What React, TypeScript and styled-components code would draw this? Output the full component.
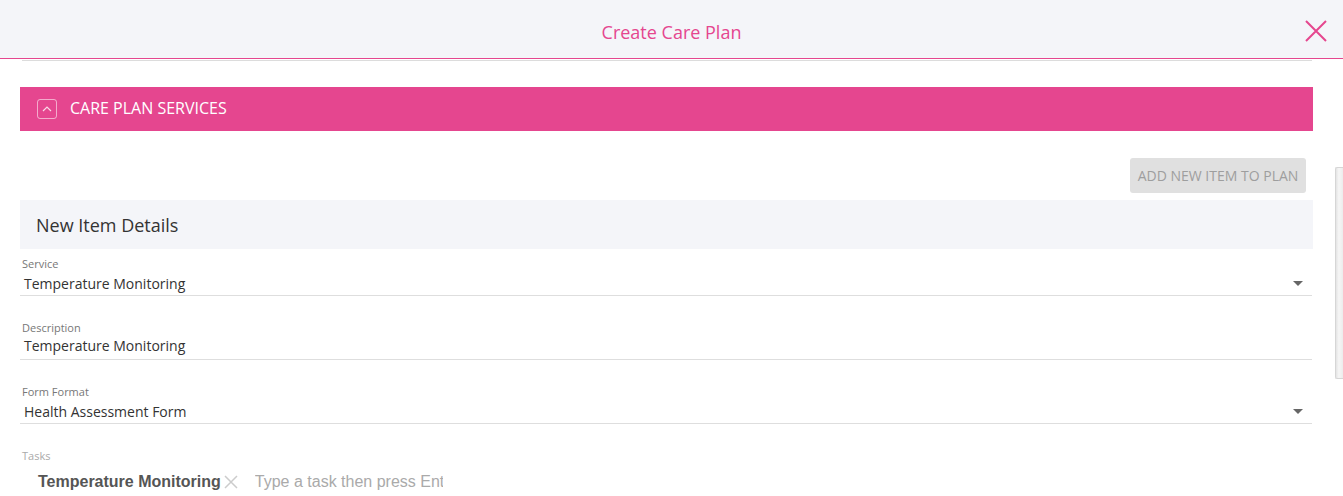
import React from "react";
import styled, { createGlobalStyle } from "styled-components";

const GlobalStyle = createGlobalStyle`
  html, body { margin: 0; padding: 0; background: #ffffff; }
  body { font-family: "Open Sans", "Liberation Sans", sans-serif; color: #333; overflow: hidden; }
  * { box-sizing: border-box; }
`;

const PINK = "#e5468f";

const Page = styled.div`
  position: relative;
  width: 1343px;
  height: 496px;
  overflow: hidden;
`;

const Header = styled.header`
  height: 59px;
  background: #f4f5f9;
  border-bottom: 1px solid ${PINK};
  display: flex;
  align-items: center;
  justify-content: center;
  position: relative;
`;

const Title = styled.h1`
  margin: 0;
  font-size: 18px;
  font-weight: 400;
  color: ${PINK};
  line-height: 24px;
  margin-top: 5px;
`;

const CloseButton = styled.button`
  position: absolute;
  right: 15px;
  top: 19px;
  width: 24px;
  height: 24px;
  padding: 0;
  border: none;
  background: transparent;
  display: flex;
  align-items: center;
  justify-content: center;
`;

const Body = styled.div`
  padding: 0 30px 0 20px;
  display: flex;
  flex-direction: column;
`;

const Divider = styled.div`
  height: 1px;
  background: #dcdcdc;
  margin: 1px 1px 0 2px;
`;

const SectionBar = styled.div`
  margin-top: 26px;
  height: 44px;
  background: ${PINK};
  display: flex;
  align-items: center;
  padding-left: 17px;
  gap: 13px;
`;

const ToggleBox = styled.span`
  width: 20px;
  height: 20px;
  border: 1px solid rgba(255, 255, 255, 0.55);
  border-radius: 3px;
  display: flex;
  align-items: center;
  justify-content: center;
`;

const SectionTitle = styled.span`
  color: #fff;
  font-size: 16px;
  text-transform: uppercase;
  line-height: 22px;
  margin-bottom: 2px;
`;

const ActionRow = styled.div`
  display: flex;
  justify-content: flex-end;
  margin-top: 27px;
  padding-right: 7px;
`;

const AddButton = styled.button`
  height: 35px;
  padding: 0 6px;
  background: #e0e0e0;
  color: #9e9e9e;
  border: none;
  border-radius: 3px;
  font-family: "Open Sans", "Liberation Sans", sans-serif;
  font-size: 14px;
  text-transform: uppercase;
  width: 176px;
`;

const DetailsHeader = styled.div`
  margin-top: 7px;
  height: 49px;
  background: #f4f5f9;
  display: flex;
  align-items: center;
  padding-left: 16px;
  font-size: 18px;
  color: #333;
`;

const Field = styled.div<{ $first?: boolean; $select?: boolean; $plain?: boolean }>`
  position: relative;
  padding-top: ${(p) => (p.$first ? "8px" : "25px")};
  padding-bottom: ${(p) => (p.$select ? "1px" : "3px")};
  border-bottom: ${(p) => (p.$plain ? "none" : "1px solid #dedede")};
  margin-right: 1px;
`;

const Label = styled.div<{ $muted?: boolean }>`
  font-size: 11px;
  line-height: 14px;
  color: ${(p) => (p.$muted ? "#aaa" : "#777")};
  padding-left: 2px;
`;

const Value = styled.div<{ $select?: boolean }>`
  font-size: 14px;
  line-height: 20px;
  color: #333;
  padding-left: 4px;
  margin-top: ${(p) => (p.$select ? "3px" : "1px")};
`;

const Caret = styled.span`
  position: absolute;
  right: 9px;
  bottom: 9px;
  width: 0;
  height: 0;
  border-left: 5px solid transparent;
  border-right: 5px solid transparent;
  border-top: 5px solid #666;
`;

const TaskRow = styled.div`
  display: flex;
  align-items: center;
  padding-left: 18px;
  margin-top: 8px;
  height: 22px;
`;

const Chip = styled.span`
  font-family: "Liberation Sans", Arial, sans-serif;
  font-weight: 700;
  font-size: 16px;
  color: #555;
  display: flex;
  align-items: center;
`;

const ChipRemove = styled.span`
  display: flex;
  margin-left: 2px;
`;

const TaskInput = styled.input`
  margin-left: 16px;
  width: 188px;
  border: none;
  outline: none;
  padding: 0;
  font-family: "Liberation Sans", Arial, sans-serif;
  font-size: 16px;
  color: #333;
  background: transparent;
  &::placeholder { color: #aaa; }
`;

const ScrollThumb = styled.div`
  position: absolute;
  right: 0;
  top: 167px;
  width: 8px;
  height: 212px;
  border: 1px solid #d6d6d6;
  border-right: none;
  border-radius: 2px 0 0 2px;
  background: linear-gradient(to right, #e4e4e4, #f6f6f6 40%, #ececec);
`;

export default function App() {
  return (
    <Page>
      <GlobalStyle />
      <Header>
        <Title>Create Care Plan</Title>
        <CloseButton aria-label="Close">
          <svg width="22" height="22" viewBox="0 0 22 22">
            <path d="M1 1 L21 21 M21 1 L1 21" stroke={PINK} strokeWidth="2" fill="none" />
          </svg>
        </CloseButton>
      </Header>
      <Body>
        <Divider />
        <SectionBar>
          <ToggleBox>
            <svg width="10" height="6" viewBox="0 0 10 6">
              <path d="M1 5 L5 1 L9 5" stroke="rgba(255,255,255,0.8)" strokeWidth="1.2" fill="none" />
            </svg>
          </ToggleBox>
          <SectionTitle>Care Plan Services</SectionTitle>
        </SectionBar>
        <ActionRow>
          <AddButton disabled>Add New Item To Plan</AddButton>
        </ActionRow>
        <DetailsHeader>New Item Details</DetailsHeader>
        <Field $first $select>
          <Label>Service</Label>
          <Value $select>Temperature Monitoring</Value>
          <Caret />
        </Field>
        <Field>
          <Label>Description</Label>
          <Value>Temperature Monitoring</Value>
        </Field>
        <Field $select>
          <Label>Form Format</Label>
          <Value $select>Health Assessment Form</Value>
          <Caret />
        </Field>
        <Field $plain>
          <Label $muted>Tasks</Label>
          <TaskRow>
            <Chip>
              Temperature Monitoring
              <ChipRemove>
                <svg width="16" height="16" viewBox="0 0 16 16">
                  <path d="M2 2 L14 14 M14 2 L2 14" stroke="#ccc" strokeWidth="1.5" fill="none" />
                </svg>
              </ChipRemove>
            </Chip>
            <TaskInput placeholder="Type a task then press Enter" />
          </TaskRow>
        </Field>
      </Body>
      <ScrollThumb />
    </Page>
  );
}
